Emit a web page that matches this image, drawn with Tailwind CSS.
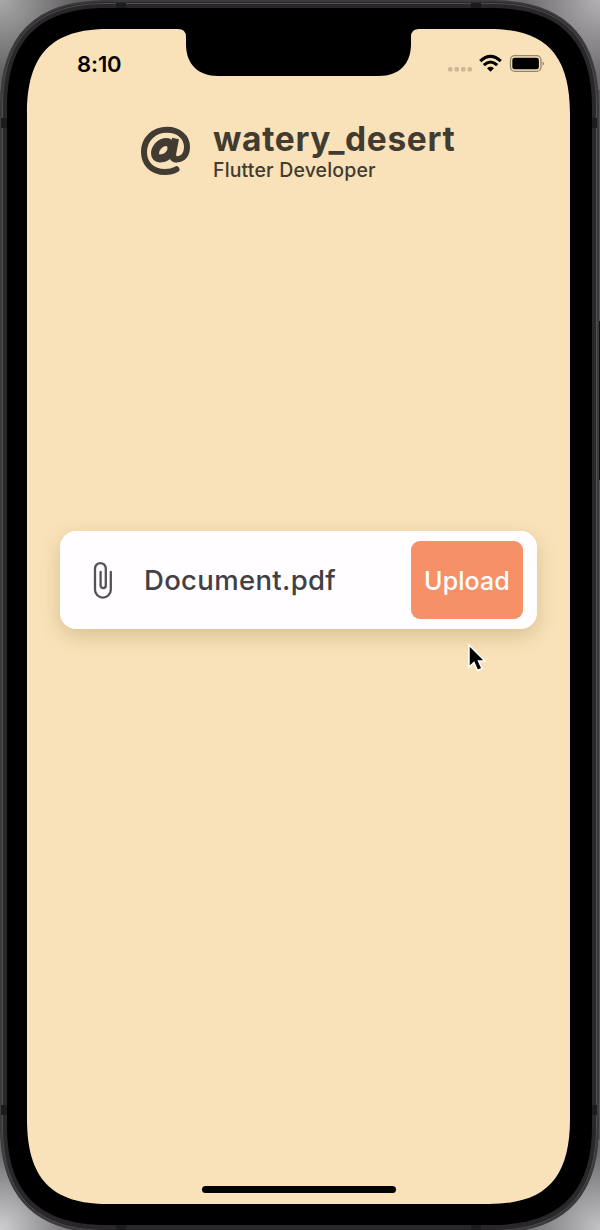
<!DOCTYPE html>
<html lang="en">
<head>
<meta charset="utf-8">
<title>Upload</title>
<script src="https://cdn.jsdelivr.net/npm/@tailwindcss/browser@4"></script>
</head>
<body class="w-[600px] h-[1230px] overflow-hidden font-['Inter',sans-serif]">
<div class="relative w-[600px] h-[1230px] overflow-hidden">
  <svg class="absolute inset-0" width="600" height="1230" viewBox="0 0 600 1230" aria-hidden="true">
    <defs>
      <radialGradient id="tl" gradientUnits="userSpaceOnUse" cx="0" cy="0" r="75"><stop offset="0" stop-color="#aaa9aa"/><stop offset="1" stop-color="#636263"/></radialGradient>
      <radialGradient id="tr" gradientUnits="userSpaceOnUse" cx="600" cy="0" r="75"><stop offset="0" stop-color="#b3b1b3"/><stop offset="1" stop-color="#6e6c6f"/></radialGradient>
      <radialGradient id="bl" gradientUnits="userSpaceOnUse" cx="0" cy="1230" r="80"><stop offset="0" stop-color="#d0cfd1"/><stop offset="1" stop-color="#6b6a6c"/></radialGradient>
      <radialGradient id="br" gradientUnits="userSpaceOnUse" cx="600" cy="1230" r="80"><stop offset="0" stop-color="#c4c3c5"/><stop offset="1" stop-color="#6b6a6c"/></radialGradient>
    </defs>
    <path fill="#555456" d="M0 0h600v1230H0z"/>
    <path fill="url(#tl)" d="M0 0h110v90H0z"/><path fill="url(#tr)" d="M490 0h110v90H490z"/>
    <path fill="url(#bl)" d="M0 1140h110v90H0z"/><path fill="url(#br)" d="M490 1140h110v90H490z"/>
    <path fill="#29272a" stroke="#3c3a3d" stroke-width="2" d="M1 106C1 36 36 1 106 1H492C562 1 598 36 598 106V1127C598 1197 562 1232 492 1232H106C36 1232 1 1197 1 1127Z"/>
    <path fill="#29272a" stroke="#504e51" stroke-width="1" d="M2.500 106C2.500 37 37 3.500 106 3.500H492C561 3.500 596.500 37 596.500 106V1127C596.500 1196 561 1230.500 492 1230.500H106C37 1230.500 2.500 1196 2.500 1127Z"/>
    <path fill="#1c1b1d" d="M116 3h10v6h-10zM471 3h10v6h-10zM1 118h6v10H1zM592 118h5v10h-5zM1 1105h6v10H1zM592 1105h5v10h-5zM116 1225h10v5h-10zM471 1225h10v5h-10z"/>
    <path fill="#111" d="M599 321h1v159h-1z"/>
    <path fill="#000" d="M7 107C7 40 39 8 106 8H492C559 8 592 40 592 107V1126C592 1193 559 1225 492 1225H106C39 1225 7 1193 7 1126Z"/>
    <path fill="#f9e2b9" d="M27 114C27 54 52 29 108 29H178Q186 29 186 37V44C186 64 198 76 218 76H379C399 76 411 64 411 44V37Q411 29 419 29H489C545 29 570 54 570 114V1119C570 1179 545 1204 489 1204H108C52 1204 27 1179 27 1119Z"/>
  </svg>

  <main class="relative flex flex-col w-[543px] h-[1175px] ml-[27px] mt-[29px]">
    <header class="flex justify-between pl-[50px] pr-[25px] pt-[22px] h-[94px]">
      <time class="text-[22px] leading-[26px] font-semibold text-black tracking-[-0.1px]">8:10</time>
      <svg width="98" height="26" viewBox="447 51 98 26" aria-label="Status">
        <g fill="#cbb895"><rect x="448" y="67" width="4.500" height="4.500" rx="1.500"/><rect x="454.500" y="67" width="4.500" height="4.500" rx="1.500"/><rect x="461" y="67" width="4.500" height="4.500" rx="1.500"/><rect x="467.500" y="67" width="4.500" height="4.500" rx="1.500"/></g>
        <g fill="none" stroke="#000" stroke-width="3.100"><path d="M480.200 61.100Q490.500 51.500 500.800 61.100"/><path d="M483.800 65.100Q490.500 58.900 497.200 65.100"/></g>
        <path d="M487 68.200Q490.500 65.300 494 68.200L490.500 71.800Z"/>
        <rect x="510.500" y="55.700" width="30.500" height="15.600" rx="4.300" fill="none" stroke="#93866e" stroke-width="1.300"/>
        <rect x="512.300" y="57.700" width="26.600" height="11.600" rx="2.400"/><path fill="#93866e" d="M542.500 61.200Q545.500 63.500 542.500 65.800Z"/>
      </svg>
    </header>

    <section class="flex h-[60px] pl-[113px] text-[#423b31]">
      <svg class="mt-[2px] shrink-0" width="52" height="52" viewBox="140 125 52 52" fill="none" stroke="currentColor" stroke-linecap="round" aria-label="At">
        <path stroke-width="6" d="M176.500 169.200C173 171.300 169.500 172 165 172C152 172 144 163.500 144 152C144 139 154 129.800 167 129.800C179 129.800 187 137 187 147C187 154.500 183 159.200 177.500 159.200"/>
        <path stroke-width="8" stroke-linejoin="round" stroke-linecap="butt" d="M171.500 149.500C171.500 144.500 169.500 142 166.500 142C160 142 155 148 155 153.500C155 156.800 157 158.400 159.800 158.400C165.500 158.400 170 155 171.500 149.500Z"/>
        <path stroke-width="7" stroke-linecap="butt" d="M175.500 138.500L172.500 154.500C172.200 157.500 174 159.200 177 159.200"/>
      </svg>
      <div class="flex flex-col ml-[21px] whitespace-nowrap">
        <h1 class="text-[33.500px] leading-[34px] -mt-px font-bold tracking-[0.660px]">watery_desert</h1>
        <p class="text-[19.500px] leading-[24px] mt-[2px] font-[450] tracking-[0.160px]">Flutter Developer</p>
      </div>
    </section>

    <section class="flex items-center w-[477px] h-[98px] mt-[348px] ml-[33px] pl-[32px] pr-[14px] rounded-[16px] bg-[#fffdff] shadow-[0_7px_20px_rgba(120,85,30,0.24)]">
      <svg class="shrink-0" width="22" height="38" viewBox="92.500 561 22 38" fill="none" stroke="#545255" stroke-width="2.300" stroke-linecap="round" aria-label="Attachment"><path d="M111.300 572V589.700a7.900 7.900 0 0 1-15.800 0V568.500a5.400 5.400 0 0 1 10.800 0V585.500a2.600 2.600 0 0 1-5.200 0V572"/></svg>
      <span class="ml-[30px] pt-[2px] text-[27.500px] font-medium text-[#424043] tracking-[0.330px] whitespace-nowrap">Document.pdf</span>
      <button class="ml-auto w-[112px] h-[78px] pt-[4px] rounded-[9px] bg-[#f69066] text-white text-[25px] font-medium tracking-[0.100px]">Upload</button>
    </section>
    <div class="mt-auto mb-[11px] ml-[175px] w-[194px] h-[7px] rounded-full bg-black"></div>
  </main>
  <svg class="absolute left-[464px] top-[639px]" width="28" height="36" viewBox="464 639 28 36" aria-hidden="true"><path d="M469 645V667L474 662.500L477.500 670.500L482 668.500L478.500 661H485Z" fill="#000" stroke="#fff" stroke-width="1.500"/></svg>
</div>
</body>
</html>
